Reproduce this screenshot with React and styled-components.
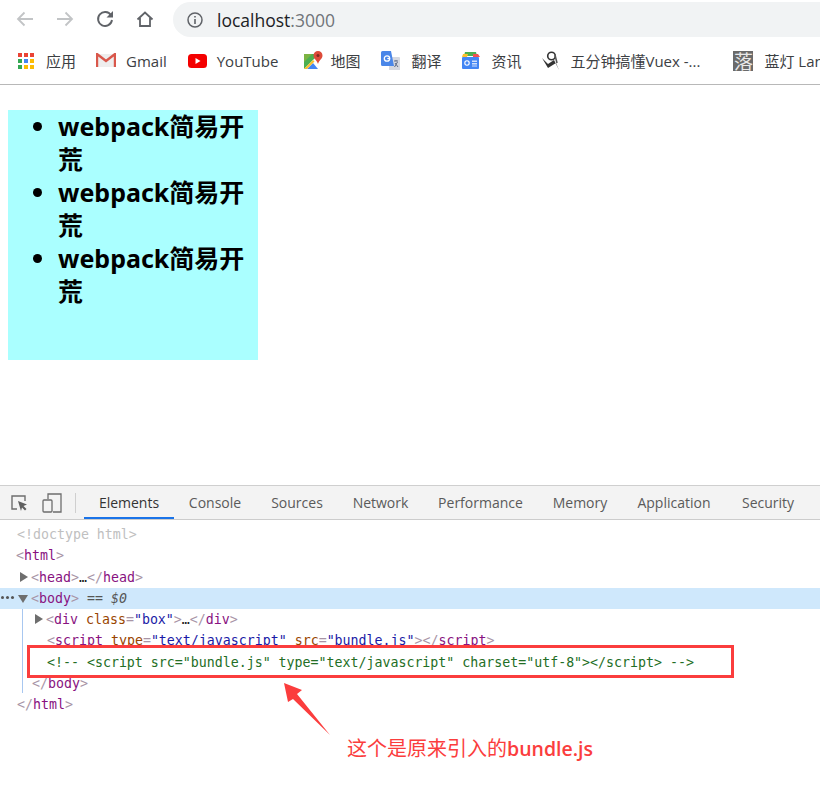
import React from 'react';
import styled, { createGlobalStyle } from 'styled-components';

const Global = createGlobalStyle`
  html, body { margin: 0; padding: 0; background: #fff; }
`;

const UI = `"Open Sans", "Noto Sans CJK SC", sans-serif`;
const MONO = `"DejaVu Sans Mono", "Noto Sans CJK SC", monospace`;

const Window = styled.div`
  position: relative;
  width: 820px;
  height: 798px;
  overflow: hidden;
  background: #fff;
  font-family: ${UI};
  display: flex;
  flex-direction: column;
`;
const NavBar = styled.div`
  height: 37px;
  display: flex;
  align-items: center;
  padding-left: 14px;
  box-sizing: border-box;
  flex: none;
`;
const NavButton = styled.div`
  width: 22px;
  height: 22px;
  margin-right: ${p => p.$gap}px;
  display: flex;
  align-items: center;
  justify-content: center;
  flex: none;
`;
const Omnibox = styled.div`
  flex: 1;
  height: 35px;
  margin-top: 2px;
  margin-left: 17px;
  background: #f1f3f4;
  border-radius: 18px 0 0 18px;
  display: flex;
  align-items: center;
  padding-left: 14px;
  gap: 14px;
`;
const Url = styled.div`
  font-size: 17.5px;
  color: #202124;
  span { color: #70757a; }
`;
const Bookmarks = styled.div`
  height: 47px;
  flex: none;
  display: flex;
  align-items: center;
  padding-left: 18px;
  border-bottom: 1px solid #b8b8b8;
  white-space: nowrap;
  overflow: hidden;
`;
const Bookmark = styled.div`
  display: flex;
  align-items: center;
  gap: ${p => p.$gap}px;
  margin-right: ${p => p.$after}px;
  font-size: 15px;
  color: #3c4043;
  flex: none;
`;
const Page = styled.div`
  height: 400px;
  flex: none;
  padding-top: 25px;
  padding-left: 8px;
  box-sizing: border-box;
`;
const Box = styled.div`
  width: 250px;
  height: 250px;
  background: #aaffff;
`;
const List = styled.ul`
  margin: 0;
  padding: 0 0 0 50px;
  width: 200px;
  font-family: "Noto Sans", "Noto Sans CJK SC", sans-serif;
  font-size: 25px;
  font-weight: 700;
  line-height: 33px;
  color: #000;
`;
const DevTools = styled.div`
  flex: 1;
  border-top: 1px solid #cfcfcf;
  display: flex;
  flex-direction: column;
`;
const TabBar = styled.div`
  height: 33px;
  flex: none;
  background: #f3f3f3;
  border-bottom: 1px solid #cccccc;
  display: flex;
  align-items: stretch;
  padding-left: 8px;
`;
const ToolIcon = styled.div`
  width: 22px;
  margin-right: ${p => p.$gap}px;
  display: flex;
  align-items: center;
  justify-content: center;
  flex: none;
`;
const Separator = styled.div`
  width: 1px;
  height: 20px;
  align-self: center;
  background: #cfcfcf;
  margin: 0 8px 0 12px;
`;
const Tab = styled.div`
  flex: none;
  width: ${p => p.$w}px;
  display: flex;
  align-items: center;
  justify-content: center;
  font-size: 14px;
  color: ${p => (p.$active ? '#333' : '#5a5a5a')};
  box-shadow: ${p => (p.$active ? 'inset 0 -2px 0 #1a73e8' : 'none')};
`;
const Tree = styled.div`
  position: relative;
  padding-top: 4px;
  font-family: ${MONO};
  font-size: 13.27px;
  display: flex;
  flex-direction: column;
`;
const Row = styled.div`
  position: relative;
  height: 21.25px;
  line-height: 21px;
  padding-left: ${p => p.$indent}px;
  white-space: nowrap;
  background: ${p => (p.$selected ? '#cfe8fc' : 'transparent')};
`;
const Guide = styled.div`
  position: absolute;
  left: 22px;
  top: 89px;
  width: 1px;
  height: 84px;
  background: #a8c7f0;
`;
const Arrow = styled.span`
  position: absolute;
  left: ${p => p.$left}px;
  top: 5px;
  width: 0;
  height: 0;
  ${p => p.$open
    ? 'border-left: 5px solid transparent; border-right: 5px solid transparent; border-top: 8px solid #6e6e6e; margin-top: 2px;'
    : 'border-top: 5px solid transparent; border-bottom: 5px solid transparent; border-left: 8px solid #6e6e6e;'}
`;
const Dots = styled.span`
  position: absolute;
  left: 1px;
  top: 8px;
  width: 3px;
  height: 3px;
  border-radius: 50%;
  background: #555;
  box-shadow: 5px 0 0 #555, 10px 0 0 #555;
`;
const Br = styled.span`color: #a894a6;`;
const Tag = styled.span`color: #881280;`;
const Attr = styled.span`color: #994500;`;
const Val = styled.span`color: #1a1aa6;`;
const Muted = styled.span`color: #c0c0c0;`;
const Comment = styled.span`color: #236e25;`;
const Ref = styled.span`color: #555; font-style: italic;`;
const Ink = styled.span`color: #222;`;

const Highlight = styled.div`
  position: absolute;
  left: 27px;
  top: 645px;
  width: 707px;
  height: 33px;
  box-sizing: border-box;
  border: 3px solid #fb3d3d;
`;
const Pointer = styled.svg`
  position: absolute;
  left: 280px;
  top: 680px;
`;
const Note = styled.div`
  position: absolute;
  left: 347px;
  top: 734px;
  font-family: "Noto Sans CJK SC", sans-serif;
  font-size: 20px;
  line-height: 28px;
  color: #fb3d3d;
  white-space: nowrap;
  b { font-family: "Open Sans", sans-serif; font-weight: 600; font-size: 19.5px; }
`;
const Glyph = styled.div`
  width: 20px;
  height: 20px;
  flex: none;
  background: #6a6a6a;
  color: #e8e8e8;
  font-family: "Noto Sans CJK SC", sans-serif;
  font-size: 19px;
  line-height: 20px;
  text-align: center;
  overflow: hidden;
`;

const Apps = () => (
  <svg width="16" height="16" viewBox="0 0 16 16">
    {[['#ea4335', '#ea4335', '#ea4335'], ['#34a853', '#4285f4', '#fbbc05'], ['#34a853', '#fbbc05', '#fbbc05']].map((r, y) =>
      r.map((c, x) => <rect key={x + '-' + y} x={x * 6} y={y * 6} width="4" height="4" fill={c} />)
    )}
  </svg>
);
const Gmail = () => (
  <svg width="20" height="15" viewBox="0 0 20 15">
    <path d="M1 1h18v13H1z" fill="#eee" />
    <path d="M1 14V1l9 7 9-7v13" fill="none" stroke="#d9574b" strokeWidth="2.4" />
  </svg>
);
const YouTube = () => (
  <svg width="19" height="14" viewBox="0 0 19 14">
    <rect width="19" height="14" rx="3.5" fill="#f40000" />
    <path d="M7.5 4l5 3-5 3z" fill="#fff" />
  </svg>
);
const Maps = () => (
  <svg width="19" height="20" viewBox="0 0 19 20">
    <path d="M0 3h14v15H0z" fill="#4caf50" />
    <path d="M0 18L14 4v14z" fill="#fff" />
    <path d="M3 18l6-6 5 6z" fill="#4285f4" />
    <path d="M0 18l9-9 1.5 1.5L3 18z" fill="#fbc02d" />
    <path d="M0 3h8L0 11z" fill="#7cb342" />
    <path d="M14 0a4.5 4.5 0 0 1 4.5 4.5C18.500 8 15 9 14 13c-1-4-4.500-5-4.500-8.500A4.500 4.500 0 0 1 14 0z" fill="#dd4b39" />
    <circle cx="14" cy="4.500" r="1.500" fill="#802b20" />
  </svg>
);
const Translate = () => (
  <svg width="19" height="20" viewBox="0 0 19 20">
    <path d="M8 6h10a1 1 0 0 1 1 1v12H8z" fill="#d5d8e0" />
    <path d="M13 10h4M15 9v1M13.500 16l3-5M14 12l3 4" stroke="#5f6b85" strokeWidth="1" fill="none" />
    <path d="M1.500 0H10l3 15H1.500A1.500 1.500 0 0 1 0 13.500v-12A1.500 1.500 0 0 1 1.500 0z" fill="#4a86e8" />
    <circle cx="6" cy="7.500" r="2.700" fill="none" stroke="#fff" strokeWidth="1.300" />
    <path d="M6.300 7.500h2.800" stroke="#fff" strokeWidth="1.200" />
  </svg>
);
const News = () => (
  <svg width="19" height="18" viewBox="0 0 19 18">
    <path d="M4 0h11l1 4H3z" fill="#4caf50" />
    <path d="M2 2h5l-1 3H1z" fill="#fbc02d" />
    <path d="M12 2h5l2 3h-7z" fill="#ef5350" />
    <rect x="1" y="5" width="17" height="12" rx="1" fill="#4285f4" />
    <circle cx="6" cy="11" r="2.200" fill="none" stroke="#fff" strokeWidth="1.100" />
    <path d="M11 8.500h5v1.500h-5zM11 11h5v1.500h-5zM11 13.500h5v1h-5z" fill="#cfe0fc" />
  </svg>
);
const Bird = () => (
  <svg width="19" height="21" viewBox="0 0 19 21">
    <circle cx="10.500" cy="6" r="3.800" fill="none" stroke="#333" strokeWidth="1.600" />
    <path d="M1 8l6 6 6-4 5 10-3-7-8 5z" fill="#333" />
    <path d="M14 5l2 8" stroke="#555" strokeWidth="1.500" />
  </svg>
);

export default function App() {
  const items = [0, 1, 2];
  return (
    <Window>
      <Global />
      <NavBar>
        <NavButton $gap={18}>
          <svg width="18" height="16" viewBox="0 0 18 16" fill="none" stroke="#c2c4c6" strokeWidth="1.800"><path d="M17 8H2M8.500 1.500L2 8l6.500 6.500" /></svg>
        </NavButton>
        <NavButton $gap={18}>
          <svg width="18" height="16" viewBox="0 0 18 16" fill="none" stroke="#c2c4c6" strokeWidth="1.800"><path d="M1 8h15M9.500 1.500L16 8l-6.500 6.500" /></svg>
        </NavButton>
        <NavButton $gap={18}>
          <svg width="18" height="18" viewBox="0 0 18 18" fill="none"><path d="M15 5.200A7 7 0 1 0 16 10" stroke="#606368" strokeWidth="1.900" /><path d="M17 1v6.500h-6.500z" fill="#606368" /></svg>
        </NavButton>
        <NavButton $gap={0}>
          <svg width="18" height="18" viewBox="0 0 18 18" fill="none" stroke="#606368" strokeWidth="1.800"><path d="M1.500 9.500L9 2.500l7.500 7M4 8v8h10V8" /></svg>
        </NavButton>
        <Omnibox>
          <svg width="16" height="16" viewBox="0 0 16 16" fill="none"><circle cx="8" cy="8" r="7" stroke="#606368" strokeWidth="1.500" /><path d="M8 7v5M8 4v1.500" stroke="#606368" strokeWidth="1.600" /></svg>
          <Url>localhost<span>:3000</span></Url>
        </Omnibox>
      </NavBar>
      <Bookmarks>
        <Bookmark $gap={12} $after={20}><Apps />应用</Bookmark>
        <Bookmark $gap={10} $after={21}><Gmail />Gmail</Bookmark>
        <Bookmark $gap={10} $after={26}><YouTube />YouTube</Bookmark>
        <Bookmark $gap={7} $after={21}><Maps />地图</Bookmark>
        <Bookmark $gap={11} $after={20}><Translate />翻译</Bookmark>
        <Bookmark $gap={11} $after={20}><News />资讯</Bookmark>
        <Bookmark $gap={10} $after={33}><Bird />五分钟搞懂Vuex -...</Bookmark>
        <Bookmark $gap={11} $after={0}><Glyph>落</Glyph>蓝灯 Lantern</Bookmark>
      </Bookmarks>
      <Page>
        <Box>
          <List>
            {items.map(i => <li key={i}>webpack简易开荒</li>)}
          </List>
        </Box>
      </Page>
      <DevTools>
        <TabBar>
          <ToolIcon $gap={11}>
            <svg width="18" height="18" viewBox="0 0 18 18" fill="none"><path d="M7 15H2V2h13v5" stroke="#6e6e6e" strokeWidth="1.400" /><path d="M8 7l9 3.500-3.500 1.500 3 3-1.500 1.500-3-3L11 17z" fill="#5f5f5f" /></svg>
          </ToolIcon>
          <ToolIcon $gap={0}>
            <svg width="20" height="20" viewBox="0 0 20 20" fill="none" stroke="#6e6e6e" strokeWidth="1.300"><path d="M6 6V1h13v18H11" /><rect x="1" y="7" width="9" height="12" rx="1" /></svg>
          </ToolIcon>
          <Separator />
          <Tab $active $w={90}>Elements</Tab>
          <Tab $w={82}>Console</Tab>
          <Tab $w={82}>Sources</Tab>
          <Tab $w={85}>Network</Tab>
          <Tab $w={115}>Performance</Tab>
          <Tab $w={84}>Memory</Tab>
          <Tab $w={104}>Application</Tab>
          <Tab $w={84}>Security</Tab>
        </TabBar>
        <Tree>
          <Guide />
          <Row $indent={17}><Muted>&lt;!doctype html&gt;</Muted></Row>
          <Row $indent={16}><Br>&lt;</Br><Tag>html</Tag><Br>&gt;</Br></Row>
          <Row $indent={31}><Arrow $left={20} /><Br>&lt;</Br><Tag>head</Tag><Br>&gt;</Br><Ink>…</Ink><Br>&lt;/</Br><Tag>head</Tag><Br>&gt;</Br></Row>
          <Row $indent={31} $selected><Dots /><Arrow $left={18} $open /><Br>&lt;</Br><Tag>body</Tag><Br>&gt;</Br> <Ref>== $0</Ref></Row>
          <Row $indent={46}><Arrow $left={35} /><Br>&lt;</Br><Tag>div</Tag> <Attr>class</Attr><Br>=</Br><Val>"box"</Val><Br>&gt;</Br><Ink>…</Ink><Br>&lt;/</Br><Tag>div</Tag><Br>&gt;</Br></Row>
          <Row $indent={47}><Br>&lt;</Br><Tag>script</Tag> <Attr>type</Attr><Br>=</Br><Val>"text/javascript"</Val> <Attr>src</Attr><Br>=</Br><Val>"bundle.js"</Val><Br>&gt;&lt;/</Br><Tag>script</Tag><Br>&gt;</Br></Row>
          <Row $indent={47}><Comment>&lt;!-- &lt;script src="bundle.js" type="text/javascript" charset="utf-8"&gt;&lt;/script&gt; --&gt;</Comment></Row>
          <Row $indent={32}><Br>&lt;/</Br><Tag>body</Tag><Br>&gt;</Br></Row>
          <Row $indent={17}><Br>&lt;/</Br><Tag>html</Tag><Br>&gt;</Br></Row>
        </Tree>
      </DevTools>
      <Highlight />
      <Pointer width="56" height="60" viewBox="280 680 56 60">
        <path d="M284 683L302 690L297 694L330 735L293 699L288 702z" fill="#fb3d3d" />
      </Pointer>
      <Note>这个是原来引入的<b>bundle.js</b></Note>
    </Window>
  );
}
